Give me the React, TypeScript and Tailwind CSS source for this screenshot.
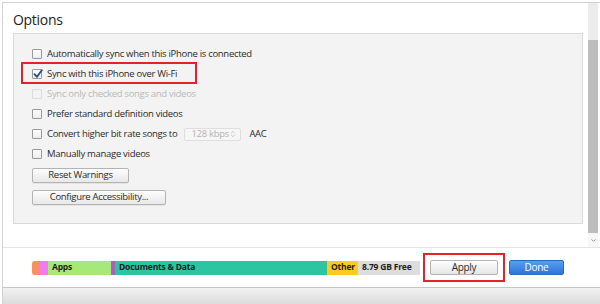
import { ChevronDown, ChevronsUpDown } from "lucide-react";

const FONT = "font-['Open_Sans','Noto_Sans',sans-serif]";

function Checkbox({ checked = false, disabled = false }: { checked?: boolean; disabled?: boolean }) {
  return (
    <span
      className={`relative flex h-[10px] w-[10px] shrink-0 items-center justify-center rounded-[1px] border ${
        disabled ? "border-[#dcdcdc] bg-[#f3f3f3]" : "border-[#9a9a9a] bg-gradient-to-b from-white to-[#ececec]"
      }`}
    >
      {checked && (
        <svg viewBox="0 0 10 10" className="absolute -top-[1px] left-0 h-[10px] w-[10px]">
          <path d="M1.5 5.2 L4 7.8 L8.8 1.2" fill="none" stroke="#2c4f86" strokeWidth="1.9" strokeLinecap="round" strokeLinejoin="round" />
        </svg>
      )}
    </span>
  );
}

function Row({ label, checked, disabled, children }: { label: string; checked?: boolean; disabled?: boolean; children?: React.ReactNode }) {
  return (
    <div className="flex h-[20px] items-center gap-[5px]">
      <Checkbox checked={checked} disabled={disabled} />
      <span className={disabled ? "text-[#b9b9b9]" : "text-[#2a2a2a]"}>{label}</span>
      {children}
    </div>
  );
}

function GrayButton({ label, width }: { label: string; width: string }) {
  return (
    <button
      className={`flex h-[15px] ${width} items-center justify-center rounded-[2px] border border-[#b4b4b4] bg-gradient-to-b from-[#fdfdfd] to-[#e8e8e8] text-[#2a2a2a] shadow-[0_1px_0_rgba(0,0,0,0.06)]`}
    >
      {label}
    </button>
  );
}

const SEGMENTS = [
  { w: "w-[8px]", bg: "bg-[#f8915e]", label: "" },
  { w: "w-[8px]", bg: "bg-[#f57af0]", label: "" },
  { w: "w-[63px]", bg: "bg-[#a6e97a]", label: "Apps" },
  { w: "w-[4px]", bg: "bg-[#b15cc0]", label: "" },
  { w: "w-[212px]", bg: "bg-[#2dc5a1]", label: "Documents & Data" },
  { w: "w-[31px]", bg: "bg-[#fccb22]", label: "Other" },
  { w: "w-[62px]", bg: "bg-[#dddddd]", label: "8.79 GB Free" },
];

export default function App() {
  return (
    <div className={`h-[304px] w-[600px] overflow-hidden bg-white pl-[2px] pt-[2px] text-[9.5px] tracking-[-0.3px] ${FONT}`}>
      <div className="flex h-full flex-col border-l border-t border-[#d2d2d2]">
        {/* Scroll area */}
        <div className="flex h-[244px] shrink-0">
          <div className="flex-1 pl-[10px]">
            <div className="pt-[5px] text-[14px] leading-[24px] tracking-[-0.3px] text-[#222]">Options</div>
            <div className="mt-[1px] h-[191px] w-[570px] border border-[#dadada] bg-[#f3f3f3] pl-[18px] pt-[10px]">
              <Row label="Automatically sync when this iPhone is connected" />
              <div className="relative">
                <span className="pointer-events-none absolute -left-[11px] -top-[2px] h-[22px] w-[176px] border-2 border-[#e8202a]" />
                <Row label="Sync with this iPhone over Wi-Fi" checked />
              </div>
              <Row label="Sync only checked songs and videos" disabled />
              <Row label="Prefer standard definition videos" />
              <Row label="Convert higher bit rate songs to">
                <span className="ml-[2px] flex h-[13px] w-[57px] items-center justify-between whitespace-nowrap rounded-[2px] border border-[#dedede] bg-[#f6f6f6] pl-[6px] pr-[3px] text-[#b3b3b3]">
                  128 kbps
                  <ChevronsUpDown className="h-[8px] w-[8px]" strokeWidth={2} />
                </span>
                <span className="ml-[3px] text-[#2a2a2a]">AAC</span>
              </Row>
              <Row label="Manually manage videos" />
              <div className="mt-[4px] flex flex-col gap-[7px]">
                <GrayButton label="Reset Warnings" width="w-[97px]" />
                <GrayButton label="Configure Accessibility..." width="w-[134px]" />
              </div>
            </div>
          </div>
          {/* Scrollbar */}
          <div className="mr-[2px] flex w-[10px] flex-col">
            <div className="h-[37px] bg-[#ececec]" />
            <div className="h-[193px] bg-[#bdbdbd]" />
            <div className="flex flex-1 items-center justify-center bg-[#f7f7f7] text-[#777]">
              <ChevronDown className="h-[7px] w-[7px]" strokeWidth={2.5} />
            </div>
          </div>
        </div>

        {/* Footer */}
        <div className="flex h-[40px] shrink-0 items-center border-t border-[#e4e4e4] pl-[29px]">
          <div className="flex h-[14px] overflow-hidden rounded-l-[3px] text-[8.5px] font-bold tracking-[-0.2px] text-[#1e1e1e]">
            {SEGMENTS.map((s, i) => (
              <div key={i} className={`${s.w} ${s.bg} flex items-center whitespace-nowrap pl-[4px]`}>
                {s.label}
              </div>
            ))}
          </div>
          <div className="ml-[3px] border-2 border-[#e8202a] p-[5px]">
            <button className="flex h-[15px] w-[68px] items-center justify-center rounded-[2px] border border-[#b4b4b4] bg-gradient-to-b from-[#fdfdfd] to-[#e6e6e6] text-[10px] text-[#2a2a2a]">
              Apply
            </button>
          </div>
          <button className="ml-[4px] flex h-[15px] w-[55px] items-center justify-center rounded-[2px] border border-[#2a68c2] bg-gradient-to-b from-[#55a0ef] to-[#2f74d6] text-[10px] text-white">
            Done
          </button>
        </div>

        {/* Bottom bar */}
        <div className="flex-1 border-t border-[#c9c9c9] bg-gradient-to-b from-[#f1f1f1] to-[#dcdcdc]" />
      </div>
    </div>
  );
}
